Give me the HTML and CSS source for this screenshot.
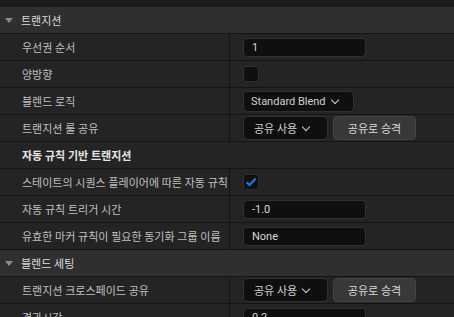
FILE: index.html
```html
<!DOCTYPE html>
<html lang="ko">
<head>
    <meta charset="UTF-8">
    <title>디테일 패널</title>
    <link rel="stylesheet" href="styles.css">
</head>
<body>
    <div class="details">
        <div class="top-strip"></div>

        <div class="section-header">
            <span class="arrow"></span>
            <span>트랜지션</span>
        </div>
        <div class="row">
            <div class="name">우선권 순서</div>
            <div class="value"><div class="text-box">1</div></div>
        </div>
        <div class="row">
            <div class="name">양방향</div>
            <div class="value"><div class="check"></div></div>
        </div>
        <div class="row">
            <div class="name">블렌드 로직</div>
            <div class="value">
                <div class="combo combo-small">Standard Blend <span class="chevron"></span></div>
            </div>
        </div>
        <div class="row">
            <div class="name">트랜지션 룰 공유</div>
            <div class="value">
                <div class="combo">공유 사용 <span class="chevron"></span></div>
                <div class="btn">공유로 승격</div>
            </div>
        </div>
        <div class="row sub-header">
            <div class="name">자동 규칙 기반 트랜지션</div>
        </div>
        <div class="row">
            <div class="name">스테이트의 시퀀스 플레이어에 따른 자동 규칙</div>
            <div class="value">
                <div class="check">
                    <svg width="12" height="10" viewBox="0 0 12 10"><path d="M1.5 5.2 L4.6 8 L10.6 1.6" fill="none" stroke="#1a78e6" stroke-width="2.2"/></svg>
                </div>
            </div>
        </div>
        <div class="row">
            <div class="name">자동 규칙 트리거 시간</div>
            <div class="value"><div class="text-box">-1.0</div></div>
        </div>
        <div class="row">
            <div class="name">유효한 마커 규칙이 필요한 동기화 그룹 이름</div>
            <div class="value"><div class="text-box">None</div></div>
        </div>

        <div class="section-header">
            <span class="arrow"></span>
            <span>블렌드 세팅</span>
        </div>
        <div class="row">
            <div class="name">트랜지션 크로스페이드 공유</div>
            <div class="value">
                <div class="combo">공유 사용 <span class="chevron"></span></div>
                <div class="btn">공유로 승격</div>
            </div>
        </div>
        <div class="row">
            <div class="name">경과시간</div>
            <div class="value"><div class="text-box">0.2</div></div>
        </div>
    </div>
</body>
</html>
```

FILE: styles.css
```css
body {
    margin: 0;
    padding: 0;
    background-color: #242424;
    font-family: Roboto, "Noto Sans CJK KR", sans-serif;
    font-size: 11px;
    color: #c0c0c0;
}
.details {
    width: 454px;
    height: 317px;
    overflow: hidden;
}
.top-strip {
    height: 7px;
    background-color: #1c1c1c;
}
.section-header {
    height: 26px;
    border-bottom: 1px solid #151515;
    background-color: #2f2f2f;
    display: flex;
    align-items: center;
    color: #dcdcdc;
}
.section-header .arrow {
    width: 0;
    height: 0;
    margin: 1px 8px 0 5px;
    border-left: 4px solid transparent;
    border-right: 4px solid transparent;
    border-top: 5px solid #8a8a8a;
}
.row {
    height: 26px;
    border-bottom: 1px solid #151515;
    display: flex;
}
.row .name {
    width: 207px;
    padding-left: 22px;
    border-right: 1px solid #151515;
    display: flex;
    align-items: center;
    white-space: nowrap;
}
.row .value {
    flex: 1;
    padding-left: 13px;
    display: flex;
    align-items: center;
    gap: 5px;
}
.sub-header .name {
    border-right: none;
    font-weight: bold;
    color: #e4e4e4;
}
.text-box {
    width: 113px;
    height: 17px;
    padding-left: 8px;
    background-color: #0f0f0f;
    border: 1px solid #303030;
    border-radius: 4px;
    display: flex;
    align-items: center;
    color: #d8d8d8;
}
.check {
    width: 14px;
    height: 14px;
    background-color: #0f0f0f;
    border: 1px solid #303030;
    border-radius: 3px;
    display: flex;
    align-items: center;
    justify-content: center;
}
.combo {
    width: 73px;
    height: 22px;
    padding-left: 10px;
    background-color: #0f0f0f;
    border: 1px solid #303030;
    border-radius: 4px;
    display: flex;
    align-items: center;
    color: #d0d0d0;
}
.combo-small {
    width: 102px;
    height: 19px;
    padding-left: 7px;
}
.chevron {
    width: 5px;
    height: 5px;
    margin: -3px 0 0 6px;
    border-right: 1.5px solid #d0d0d0;
    border-bottom: 1.5px solid #d0d0d0;
    transform: rotate(45deg);
}
.btn {
    width: 81px;
    height: 22px;
    background-color: #383838;
    border: 1px solid #444444;
    border-radius: 4px;
    display: flex;
    align-items: center;
    justify-content: center;
    color: #d8d8d8;
}
```
